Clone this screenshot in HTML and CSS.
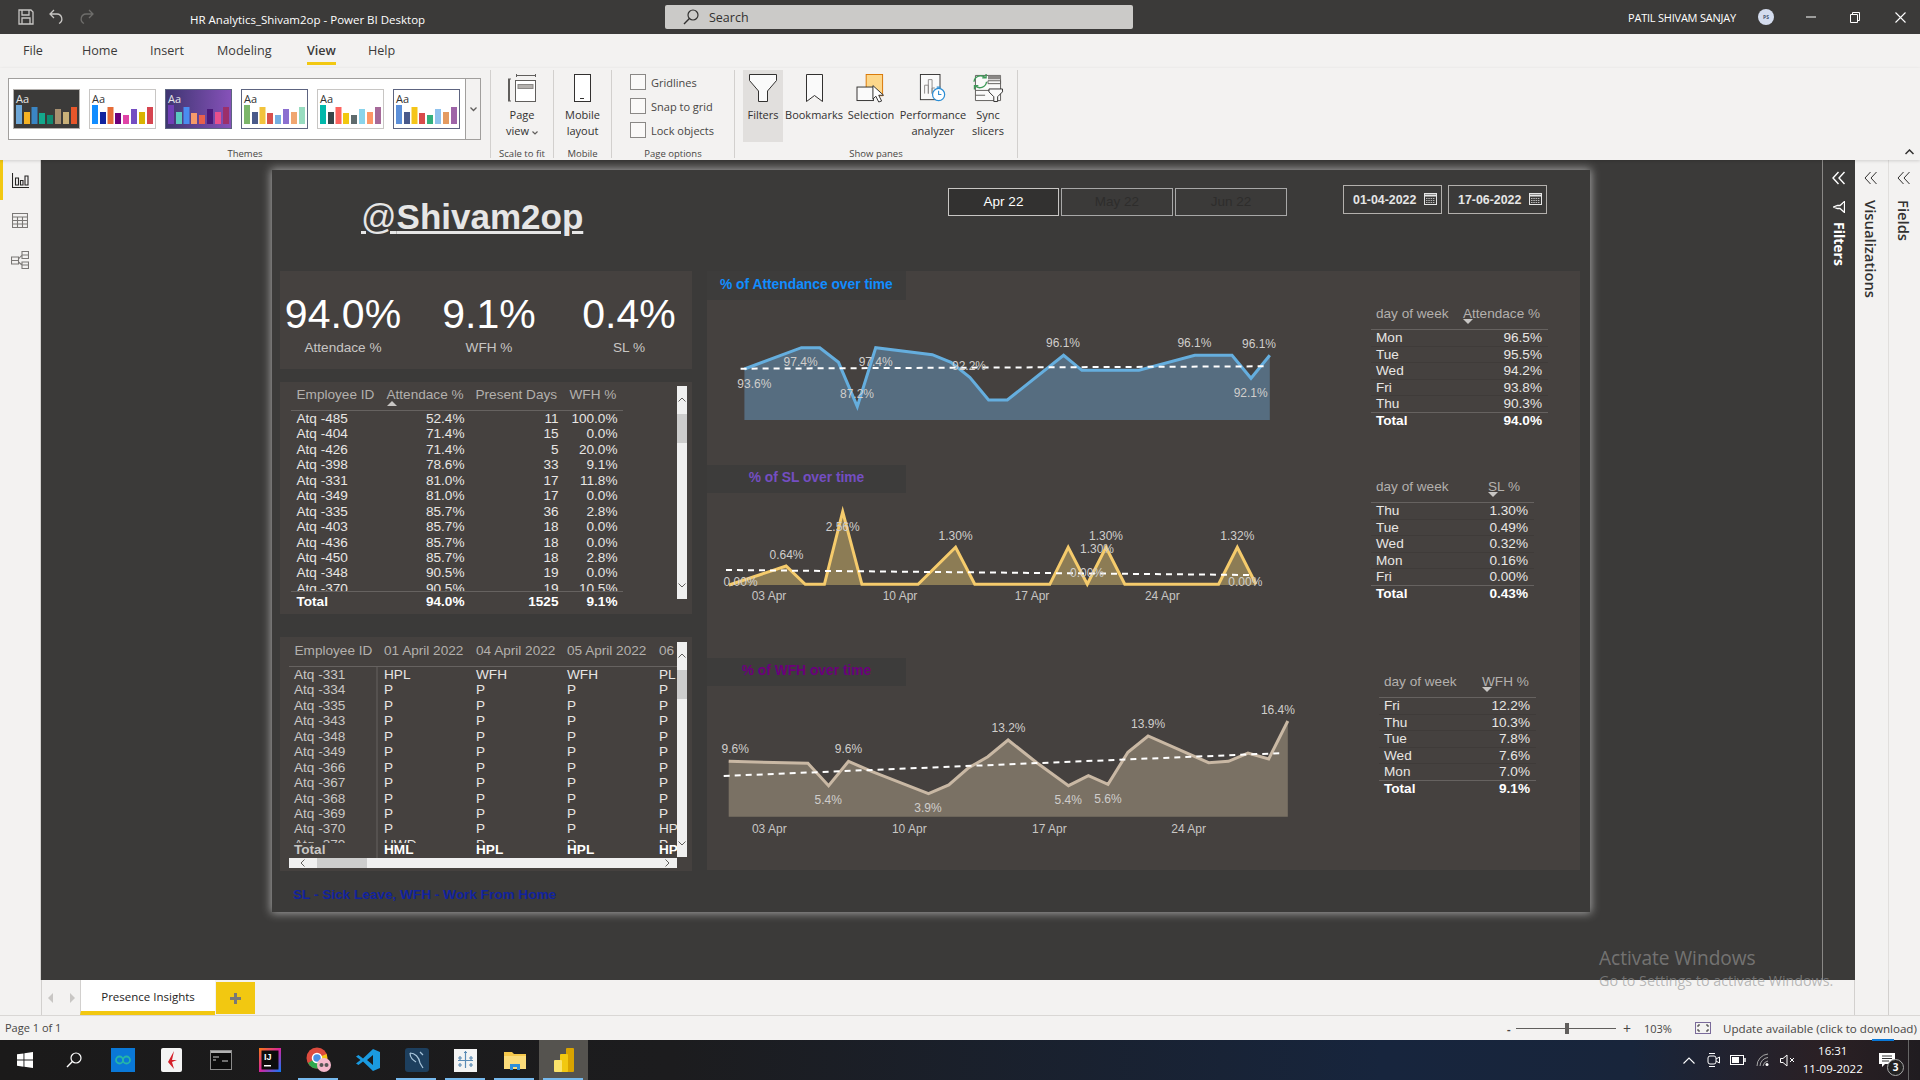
FILE: index.html
```html
<!DOCTYPE html>
<html lang="en">
<head>
<meta charset="utf-8">
<title>HR Analytics_Shivam2op - Power BI Desktop</title>
<link rel="stylesheet" href="styles.css">
</head>
<body>
<div class="app">

  <header class="titlebar">
    <div class="qat">
      <svg class="qat-i" width="16" height="16" viewBox="0 0 16 16"><path d="M1 1h12l2 2v12H1z M4 1v5h7V1 M4 15v-6h8v6" fill="none" stroke="#c8c6c4" stroke-width="1.3"/></svg>
      <svg class="qat-i" width="15" height="16" viewBox="0 0 15 16"><path d="M5 1L1 5l4 4 M1 5h7a5 5 0 0 1 2 9.5" fill="none" stroke="#c8c6c4" stroke-width="1.3"/></svg>
      <svg class="qat-i" width="15" height="16" viewBox="0 0 15 16"><path d="M10 1l4 4-4 4 M14 5H7a5 5 0 0 0-2 9.5" fill="none" stroke="#6e6d6b" stroke-width="1.3"/></svg>
    </div>
    <div class="doc-title">HR Analytics_Shivam2op - Power BI Desktop</div>
    <div class="searchbox">
      <svg width="16" height="16" viewBox="0 0 16 16"><circle cx="10" cy="6" r="5" fill="none" stroke="#323130" stroke-width="1.2"/><path d="M6.4 9.6L1 15" stroke="#323130" stroke-width="1.4"/></svg>
      <span>Search</span>
    </div>
    <div class="account">PATIL SHIVAM SANJAY</div>
    <div class="avatar">PS</div>
    <div class="winbtn win-min"><svg width="10" height="10" viewBox="0 0 10 10"><path d="M0 5h10" stroke="#fff"/></svg></div>
    <div class="winbtn win-res"><svg width="10" height="11" viewBox="0 0 10 11"><path d="M.5 2.5h7v8h-7z M2.5 2.5v-2h7v8h-2" fill="none" stroke="#fff"/></svg></div>
    <div class="winbtn win-close"><svg width="11" height="11" viewBox="0 0 11 11"><path d="M.5.5l10 10M10.5.5l-10 10" stroke="#fff" stroke-width="1.1"/></svg></div>
  </header>

  <nav class="rtabs">
    <span class="rtab">File</span>
    <span class="rtab">Home</span>
    <span class="rtab">Insert</span>
    <span class="rtab">Modeling</span>
    <span class="rtab"><b class="rtab-on">View</b></span>
    <span class="rtab">Help</span>
  </nav>

  <section class="ribbon">
    <div class="rgroup g-themes">
      <div class="gallery">
        <div class="thumbs">
          <svg class="thumb th-dark" width="67" height="40" viewBox="0 0 67 40"><text x="3" y="14" class="aa aa-l">Aa</text><rect x="3" y="16" width="6" height="19" fill="#6fa8d8"/><rect x="11" y="23" width="6" height="12" fill="#f5b324"/><rect x="18.500" y="18" width="6" height="17" fill="#3a85c4"/><rect x="26" y="24" width="6" height="11" fill="#14a88c"/><rect x="34" y="26" width="6" height="9" fill="#0f8a70"/><rect x="42" y="20" width="6" height="15" fill="#a89070"/><rect x="50" y="23" width="6" height="12" fill="#c9b078"/><rect x="58" y="18" width="6" height="17" fill="#e8562a"/></svg>
          <svg class="thumb" width="67" height="40" viewBox="0 0 67 40"><text x="3" y="14" class="aa">Aa</text><rect x="3" y="16" width="6" height="19" fill="#118dff"/><rect x="11" y="23" width="6" height="12" fill="#12239e"/><rect x="18.500" y="18" width="6" height="17" fill="#e66c37"/><rect x="26" y="24" width="6" height="11" fill="#6b007b"/><rect x="34" y="26" width="6" height="9" fill="#e044a7"/><rect x="42" y="20" width="6" height="15" fill="#744ec2"/><rect x="50" y="23" width="6" height="12" fill="#d9b300"/><rect x="58" y="18" width="6" height="17" fill="#d64550"/></svg>
          <svg class="thumb th-purple" width="67" height="40" viewBox="0 0 67 40"><defs><linearGradient id="pg" x1="0" y1="0" x2="1" y2="0"><stop offset="0" stop-color="#3d3570"/><stop offset="1" stop-color="#8752ba"/></linearGradient></defs><rect width="67" height="40" fill="url(#pg)"/><text x="3" y="14" class="aa aa-l">Aa</text><rect x="3" y="16" width="6" height="19" fill="#6f3fb5"/><rect x="11" y="23" width="6" height="12" fill="#5ac8c0"/><rect x="18.500" y="18" width="6" height="17" fill="#4a8cf0"/><rect x="26" y="24" width="6" height="11" fill="#f59a6a"/><rect x="34" y="26" width="6" height="9" fill="#e8604c"/><rect x="42" y="20" width="6" height="15" fill="#4a1a7a"/><rect x="50" y="23" width="6" height="12" fill="#e84f8c"/><rect x="58" y="18" width="6" height="17" fill="#9c2f6a"/></svg>
          <svg class="thumb th-blue" width="67" height="40" viewBox="0 0 67 40"><text x="3" y="14" class="aa">Aa</text><rect x="3" y="16" width="6" height="19" fill="#7cb66a"/><rect x="11" y="23" width="6" height="12" fill="#4a5a8a"/><rect x="18.500" y="18" width="6" height="17" fill="#f2c33c"/><rect x="26" y="24" width="6" height="11" fill="#d8504c"/><rect x="34" y="26" width="6" height="9" fill="#74aee0"/><rect x="42" y="20" width="6" height="15" fill="#8b6fd0"/><rect x="50" y="23" width="6" height="12" fill="#f0a670"/><rect x="58" y="18" width="6" height="17" fill="#98dcc0"/></svg>
          <svg class="thumb" width="67" height="40" viewBox="0 0 67 40"><text x="3" y="14" class="aa">Aa</text><rect x="3" y="16" width="6" height="19" fill="#01b8aa"/><rect x="11" y="23" width="6" height="12" fill="#374649"/><rect x="18.500" y="18" width="6" height="17" fill="#fd625e"/><rect x="26" y="24" width="6" height="11" fill="#f2c80f"/><rect x="34" y="26" width="6" height="9" fill="#5f6b6d"/><rect x="42" y="20" width="6" height="15" fill="#8ad4eb"/><rect x="50" y="23" width="6" height="12" fill="#fe9666"/><rect x="58" y="18" width="6" height="17" fill="#a66999"/></svg>
          <svg class="thumb th-blue" width="67" height="40" viewBox="0 0 67 40"><text x="3" y="14" class="aa">Aa</text><rect x="3" y="16" width="6" height="19" fill="#5b8fd9"/><rect x="11" y="23" width="6" height="12" fill="#495a8c"/><rect x="18.500" y="18" width="6" height="17" fill="#f5c518"/><rect x="26" y="24" width="6" height="11" fill="#d84b4b"/><rect x="34" y="26" width="6" height="9" fill="#33b07e"/><rect x="42" y="20" width="6" height="15" fill="#8fc2ee"/><rect x="50" y="23" width="6" height="12" fill="#e49a60"/><rect x="58" y="18" width="6" height="17" fill="#9e64a8"/></svg>
        </div>
        <div class="gal-more"><svg width="7" height="5" viewBox="0 0 7 5"><path d="M.5.5l3 3 3-3" fill="none" stroke="#605e5c" stroke-width="1.3"/></svg></div>
      </div>
      <div class="rlabel">Themes</div>
    </div>

    <div class="rgroup g-scale">
      <div class="bigbtn">
        <svg class="bigicon" width="28" height="28" viewBox="0 0 28 28"><path d="M8.500 1.500h19 M8.500 0v3 M27.500 0v3 M.5 5v22 M0 5h3 M0 27h3 M1.500 5v22" fill="none" stroke="#605e5c"/><rect x="7.500" y="6.500" width="20" height="21" fill="#fff" stroke="#605e5c"/><rect x="10" y="10.500" width="15" height="4" fill="#b3b0ad" stroke="#8a8886"/></svg>
        <span>Page</span><span>view <svg width="6" height="4" viewBox="0 0 6 4"><path d="M.5.5L3 3 5.500.5" fill="none" stroke="#605e5c" stroke-width="1.2"/></svg></span>
      </div>
      <div class="rlabel">Scale to fit</div>
    </div>

    <div class="rgroup g-mobile">
      <div class="bigbtn">
        <svg class="bigicon" width="17" height="28" viewBox="0 0 17 28"><rect x=".5" y=".5" width="16" height="27" fill="#fff" stroke="#323130"/><path d="M6 24.500h4" stroke="#323130"/></svg>
        <span>Mobile</span><span>layout</span>
      </div>
      <div class="rlabel">Mobile</div>
    </div>

    <div class="rgroup g-options">
      <div class="checks">
        <div class="chk"><i></i>Gridlines</div>
        <div class="chk"><i></i>Snap to grid</div>
        <div class="chk"><i></i>Lock objects</div>
      </div>
      <div class="rlabel">Page options</div>
    </div>

    <div class="rgroup g-panes">
      <div class="panes">
        <div class="bigbtn b-filters">
          <svg class="bigicon" width="28" height="28" viewBox="0 0 28 28"><path d="M.5.500h27v6L18.500 17v10.500h-9V17L.5 6.500z" fill="#fafafa" stroke="#323130"/></svg>
          <span>Filters</span>
        </div>
        <div class="bigbtn b-book">
          <svg class="bigicon" width="17" height="28" viewBox="0 0 17 28"><path d="M.5.500h16v27l-8-6-8 6z" fill="#fafafa" stroke="#323130"/></svg>
          <span>Bookmarks</span>
        </div>
        <div class="bigbtn b-sel">
          <svg class="bigicon" width="30" height="29" viewBox="0 0 30 29"><rect x="10" y=".5" width="17" height="22" fill="#fdd78a" stroke="#d97706"/><rect x=".5" y="13.500" width="17" height="14" fill="#fafafa" stroke="#323130"/><path d="M17 12v14l3-3 3 6 3-1-3-6h5z" fill="#fff" stroke="#323130"/></svg>
          <span>Selection</span>
        </div>
        <div class="bigbtn b-perf">
          <svg class="bigicon" width="28" height="30" viewBox="0 0 28 30"><rect x=".5" y=".5" width="21" height="27" fill="#fafafa" stroke="#323130"/><path d="M5 21V12h4v9 M9 21V6h4v15 M13 21v-6h3" fill="none" stroke="#8a8886"/><circle cx="20" cy="22" r="6.500" fill="#fff" stroke="#2a8dd4" stroke-width="1.3"/><path d="M20 18v4h3 M18 14h4" fill="none" stroke="#2a8dd4" stroke-width="1.2"/></svg>
          <span>Performance</span><span>analyzer</span>
        </div>
        <div class="bigbtn b-sync">
          <svg class="bigicon" width="32" height="29" viewBox="0 0 32 29"><path d="M3 1.500h26v26H3z M3 17h17 M3 22h10 M16 7h13v3H16z" fill="#fafafa" stroke="#605e5c"/><rect x="16" y="1.500" width="13" height="4" fill="#8a8886"/><path d="M1.500 8a7 7 0 0 1 12-4 M14.500 8a7 7 0 0 1-12 4 M10 4h4V0 M6 12H2v4" fill="none" stroke="#3d9a58" stroke-width="1.4"/><path d="M17 15.500h14v3l-5 5v5h-4v-5l-5-5z" fill="#fafafa" stroke="#323130"/></svg>
          <span>Sync</span><span>slicers</span>
        </div>
      </div>
      <div class="rlabel">Show panes</div>
    </div>
    <svg class="collapse" width="9" height="6" viewBox="0 0 9 6"><path d="M.5 5L4.500 1l4 4" fill="none" stroke="#323130" stroke-width="1.500"/></svg>
  </section>

  <main class="main">
    <aside class="rail">
      <div class="rail-i rail-on"><svg width="17" height="15" viewBox="0 0 17 15"><path d="M.5 0v14.500H17 M3.500 5h3v7h-3z M8.500 7.500h2.500V12H8.500z M13 3h3v9h-3z" fill="none" stroke="#252423" stroke-width="1.100"/></svg></div>
      <div class="rail-i"><svg width="16" height="15" viewBox="0 0 16 15"><path d="M.5.5h15v14H.5z M.5 4h15 M.5 7.500h15 M.5 11h15 M5.500 4v10.500 M10.500 4v10.500" fill="none" stroke="#7a7876" stroke-width="1.100"/></svg></div>
      <div class="rail-i"><svg width="18" height="18" viewBox="0 0 18 18"><path d="M.5 6h7v7h-7z M11 .5h6.500v7H11z M11 11h6.500v6.500H11z M7.500 8L11 4 M7.500 11l3.500 3 M.5 9.500h7 M11 4h6.500 M11 14h6.500" fill="none" stroke="#7a7876" stroke-width="1.100"/></svg></div>
    </aside>

    <div class="canvas">
      <div class="report">
        <div class="report-head">
          <div class="brand"><span class="brand-at">@</span>Shivam2op</div>
          <div class="slicer">
            <div class="slice slice-on">Apr 22</div>
            <div class="slice">May 22</div>
            <div class="slice">Jun 22</div>
          </div>
          <div class="dates">
            <div class="datebox">01-04-2022<svg width="13" height="13" viewBox="0 0 13 13"><rect x=".5" y="1.500" width="12" height="11" fill="none" stroke="#e6e6e6"/><path d="M.5 3.500h12" stroke="#e6e6e6" stroke-width="2"/><path d="M2 6.500h9M2 8.500h9M2 10.500h9" stroke="#b8b8b8" stroke-dasharray="1.500 .8"/></svg></div>
            <div class="datebox">17-06-2022<svg width="13" height="13" viewBox="0 0 13 13"><rect x=".5" y="1.500" width="12" height="11" fill="none" stroke="#e6e6e6"/><path d="M.5 3.500h12" stroke="#e6e6e6" stroke-width="2"/><path d="M2 6.500h9M2 8.500h9M2 10.500h9" stroke="#b8b8b8" stroke-dasharray="1.500 .8"/></svg></div>
          </div>
        </div>

        <div class="report-body">
          <div class="leftcol">
            <div class="panel kpis">
              <div class="kpi k1"><div class="kpi-v">94.0%</div><div class="kpi-l">Attendace %</div></div>
              <div class="kpi k2"><div class="kpi-v">9.1%</div><div class="kpi-l">WFH %</div></div>
              <div class="kpi k3"><div class="kpi-v">0.4%</div><div class="kpi-l">SL %</div></div>
            </div>

            <div class="panel tpanel tp1">
              <div class="grid1">
                <div class="thead tr1">
                  <span>Employee ID</span><span class="sort-up">Attendace %</span><span>Present Days</span><span>WFH %</span>
                </div>
                <div class="tscroll ts1">
                  <div class="tr tr1"><span>Atq -485</span><span>52.4%</span><span>11</span><span>100.0%</span></div>
                  <div class="tr tr1"><span>Atq -404</span><span>71.4%</span><span>15</span><span>0.0%</span></div>
                  <div class="tr tr1"><span>Atq -426</span><span>71.4%</span><span>5</span><span>20.0%</span></div>
                  <div class="tr tr1"><span>Atq -398</span><span>78.6%</span><span>33</span><span>9.1%</span></div>
                  <div class="tr tr1"><span>Atq -331</span><span>81.0%</span><span>17</span><span>11.8%</span></div>
                  <div class="tr tr1"><span>Atq -349</span><span>81.0%</span><span>17</span><span>0.0%</span></div>
                  <div class="tr tr1"><span>Atq -335</span><span>85.7%</span><span>36</span><span>2.8%</span></div>
                  <div class="tr tr1"><span>Atq -403</span><span>85.7%</span><span>18</span><span>0.0%</span></div>
                  <div class="tr tr1"><span>Atq -436</span><span>85.7%</span><span>18</span><span>0.0%</span></div>
                  <div class="tr tr1"><span>Atq -450</span><span>85.7%</span><span>18</span><span>2.8%</span></div>
                  <div class="tr tr1"><span>Atq -348</span><span>90.5%</span><span>19</span><span>0.0%</span></div>
                  <div class="tr tr1"><span>Atq -370</span><span>90.5%</span><span>19</span><span>10.5%</span></div>
                </div>
                <div class="ttotal tr1"><span>Total</span><span>94.0%</span><span>1525</span><span>9.1%</span></div>
              </div>
              <div class="vbar vb1">
                <svg class="vb-up" width="8" height="5" viewBox="0 0 8 5"><path d="M.5 4.500L4 1l3.500 3.500" fill="none" stroke="#605e5c"/></svg>
                <i class="vb-thumb"></i>
                <svg class="vb-down" width="8" height="5" viewBox="0 0 8 5"><path d="M.5.5L4 4 7.500.5" fill="none" stroke="#605e5c"/></svg>
              </div>
            </div>

            <div class="panel tpanel tp2">
              <div class="grid2">
                <div class="thead2 tr2">
                  <span>Employee ID</span><span>01 April 2022</span><span>04 April 2022</span><span>05 April 2022</span><span>06</span>
                </div>
                <div class="tscroll ts2">
                  <div class="tr tr2"><span>Atq -331</span><span>HPL</span><span>WFH</span><span>WFH</span><span>PL</span></div>
                  <div class="tr tr2"><span>Atq -334</span><span>P</span><span>P</span><span>P</span><span>P</span></div>
                  <div class="tr tr2"><span>Atq -335</span><span>P</span><span>P</span><span>P</span><span>P</span></div>
                  <div class="tr tr2"><span>Atq -343</span><span>P</span><span>P</span><span>P</span><span>P</span></div>
                  <div class="tr tr2"><span>Atq -348</span><span>P</span><span>P</span><span>P</span><span>P</span></div>
                  <div class="tr tr2"><span>Atq -349</span><span>P</span><span>P</span><span>P</span><span>P</span></div>
                  <div class="tr tr2"><span>Atq -366</span><span>P</span><span>P</span><span>P</span><span>P</span></div>
                  <div class="tr tr2"><span>Atq -367</span><span>P</span><span>P</span><span>P</span><span>P</span></div>
                  <div class="tr tr2"><span>Atq -368</span><span>P</span><span>P</span><span>P</span><span>P</span></div>
                  <div class="tr tr2"><span>Atq -369</span><span>P</span><span>P</span><span>P</span><span>P</span></div>
                  <div class="tr tr2"><span>Atq -370</span><span>P</span><span>P</span><span>P</span><span>HP</span></div>
                  <div class="tr tr2"><span>Atq -379</span><span>HWD</span><span>P</span><span>P</span><span>P</span></div>
                </div>
                <div class="ttotal2 tr2"><span>Total</span><span>HML</span><span>HPL</span><span>HPL</span><span>HP</span></div>
                <div class="hbar">
                  <svg class="hb-l" width="5" height="8" viewBox="0 0 5 8"><path d="M4.500.5L1 4l3.500 3.500" fill="none" stroke="#605e5c"/></svg>
                  <i class="hb-thumb"></i>
                  <svg class="hb-r" width="5" height="8" viewBox="0 0 5 8"><path d="M.5.500L4 4 .5 7.500" fill="none" stroke="#605e5c"/></svg>
                </div>
              </div>
              <div class="vbar vb2">
                <svg class="vb-up" width="8" height="5" viewBox="0 0 8 5"><path d="M.5 4.500L4 1l3.500 3.500" fill="none" stroke="#605e5c"/></svg>
                <i class="vb-thumb"></i>
                <svg class="vb-down" width="8" height="5" viewBox="0 0 8 5"><path d="M.5.5L4 4 7.500.5" fill="none" stroke="#605e5c"/></svg>
              </div>
            </div>

            <div class="footnote">SL - Sick Leave, WFH - Work From Home</div>
          </div>

          <div class="panel charts">
            <section class="chart c1">
              <div class="chart-left">
                <div class="band band-1 t-blue">% of Attendance over time</div>
                <svg class="plot" width="664" height="165" viewBox="707 300 664 165">
                  <polygon class="a-blue" points="744.4,369 801.4,347.7 819.8,347.7 838.5,362.3 857.3,406.7 875.7,347.7 932.3,354.7 951,362.3 969.8,377.3 988.6,400 1007.3,400 1063.6,355.3 1081.9,370.3 1139,370.3 1194.8,355.3 1232,355.3 1251,378.3 1269.8,355.3 1269.8,420 744.4,420"/>
                  <polyline class="l-blue" points="744.4,369 801.4,347.7 819.8,347.7 838.5,362.3 857.3,406.7 875.7,347.7 932.3,354.7 951,362.3 969.8,377.3 988.6,400 1007.3,400 1063.6,355.3 1081.9,370.3 1139,370.3 1194.8,355.3 1232,355.3 1251,378.3 1269.8,355.3"/>
                  <line class="trend" x1="740.6" y1="368.700" x2="1266.400" y2="366.300"/>
                  <text class="dl" x="754.300" y="388">93.6%</text>
                  <text class="dl" x="800.600" y="366">97.4%</text>
                  <text class="dl" x="875.700" y="366">97.4%</text>
                  <text class="dl" x="857" y="398">87.2%</text>
                  <text class="dl" x="969" y="370">92.2%</text>
                  <text class="dl" x="1063" y="347">96.1%</text>
                  <text class="dl" x="1194.400" y="347">96.1%</text>
                  <text class="dl" x="1259" y="348">96.1%</text>
                  <text class="dl" x="1250.700" y="397">92.1%</text>
                </svg>
              </div>
              <div class="daytbl dt-a">
                <div class="dhead"><span>day of week</span><span class="sort-down">Attendace %</span></div>
                <div class="drow"><span>Mon</span><span>96.5%</span></div>
                <div class="drow"><span>Tue</span><span>95.5%</span></div>
                <div class="drow"><span>Wed</span><span>94.2%</span></div>
                <div class="drow"><span>Fri</span><span>93.8%</span></div>
                <div class="drow"><span>Thu</span><span>90.3%</span></div>
                <div class="dtotal"><span>Total</span><span>94.0%</span></div>
              </div>
            </section>

            <section class="chart c2">
              <div class="chart-left">
                <div class="band band-2 t-violet">% of SL over time</div>
                <svg class="plot" width="664" height="165" viewBox="707 493 664 165">
                  <polygon class="a-gold" points="729,585 786.1,566 805.2,584.3 824.4,584.3 842.7,511.7 861.9,584.3 918.1,584.3 955.6,547.3 974.8,584.3 1049.8,584.3 1068.2,547.3 1087.3,584.3 1106,547.3 1124.8,584.3 1218.6,584.3 1237.3,547.3 1256,584.3 1256,585"/>
                  <polyline class="l-gold" points="729,585 786.1,566 805.2,584.3 824.4,584.3 842.7,511.7 861.9,584.3 918.1,584.3 955.6,547.3 974.8,584.3 1049.8,584.3 1068.2,547.3 1087.3,584.3 1106,547.3 1124.8,584.3 1218.6,584.3 1237.3,547.3 1256,584.3"/>
                  <line class="trend" x1="726" y1="570" x2="1251" y2="575"/>
                  <text class="dl" x="740.600" y="586">0.00%</text>
                  <text class="dl" x="786.500" y="559">0.64%</text>
                  <text class="dl" x="842.700" y="531">2.56%</text>
                  <text class="dl" x="955.600" y="540">1.30%</text>
                  <text class="dl" x="1097" y="553">1.30%</text>
                  <text class="dl" x="1106" y="540">1.30%</text>
                  <text class="dl" x="1087" y="577">0.00%</text>
                  <text class="dl" x="1237.300" y="540">1.32%</text>
                  <text class="dl" x="1245.300" y="586">0.00%</text>
                  <text class="ax" x="769" y="600">03 Apr</text>
                  <text class="ax" x="900" y="600">10 Apr</text>
                  <text class="ax" x="1032" y="600">17 Apr</text>
                  <text class="ax" x="1162.300" y="600">24 Apr</text>
                </svg>
              </div>
              <div class="daytbl dt-b">
                <div class="dhead"><span>day of week</span><span class="sort-down">SL %</span></div>
                <div class="drow"><span>Thu</span><span>1.30%</span></div>
                <div class="drow"><span>Tue</span><span>0.49%</span></div>
                <div class="drow"><span>Wed</span><span>0.32%</span></div>
                <div class="drow"><span>Mon</span><span>0.16%</span></div>
                <div class="drow"><span>Fri</span><span>0.00%</span></div>
                <div class="dtotal"><span>Total</span><span>0.43%</span></div>
              </div>
            </section>

            <section class="chart c3">
              <div class="chart-left">
                <div class="band band-3 t-purple">% of WFH over time</div>
                <svg class="plot" width="664" height="184" viewBox="707 686 664 184">
                  <polygon class="a-taupe" points="728.7,761.3 807.9,763.3 828.6,785.7 848.5,761.3 872.2,771.7 928.5,793.7 948.8,785 967.9,768.3 987.8,756.7 1008.1,740 1036.8,762.7 1068.5,785.7 1088.4,775.7 1108,784.3 1127.9,752.3 1148.1,736 1208.6,762.7 1228.5,761.3 1248,753 1268.7,759 1287.8,721 1287.8,816.7 728.7,816.7"/>
                  <polyline class="l-taupe" points="728.7,761.3 807.9,763.3 828.6,785.7 848.5,761.3 872.2,771.7 928.5,793.7 948.8,785 967.9,768.3 987.8,756.7 1008.1,740 1036.8,762.7 1068.5,785.7 1088.4,775.7 1108,784.3 1127.9,752.3 1148.1,736 1208.6,762.7 1228.5,761.3 1248,753 1268.7,759 1287.8,721"/>
                  <line class="trend" x1="723.700" y1="776" x2="1284" y2="753"/>
                  <text class="dl" x="735.200" y="753">9.6%</text>
                  <text class="dl" x="848.500" y="753">9.6%</text>
                  <text class="dl" x="828.200" y="804">5.4%</text>
                  <text class="dl" x="928" y="812">3.9%</text>
                  <text class="dl" x="1008.500" y="732">13.2%</text>
                  <text class="dl" x="1068.200" y="804">5.4%</text>
                  <text class="dl" x="1108" y="803">5.6%</text>
                  <text class="dl" x="1148.100" y="728">13.9%</text>
                  <text class="dl" x="1277.900" y="714">16.4%</text>
                  <text class="ax" x="769.300" y="833">03 Apr</text>
                  <text class="ax" x="909.300" y="833">10 Apr</text>
                  <text class="ax" x="1049.400" y="833">17 Apr</text>
                  <text class="ax" x="1188.700" y="833">24 Apr</text>
                </svg>
              </div>
              <div class="daytbl dt-c">
                <div class="dhead"><span>day of week</span><span class="sort-down">WFH %</span></div>
                <div class="drow"><span>Fri</span><span>12.2%</span></div>
                <div class="drow"><span>Thu</span><span>10.3%</span></div>
                <div class="drow"><span>Tue</span><span>7.8%</span></div>
                <div class="drow"><span>Wed</span><span>7.6%</span></div>
                <div class="drow"><span>Mon</span><span>7.0%</span></div>
                <div class="dtotal"><span>Total</span><span>9.1%</span></div>
              </div>
            </section>
          </div>
        </div>
      </div>
    </div>

    <aside class="vpane vp-filters">
      <svg class="chev" width="14" height="14" viewBox="0 0 14 14"><path d="M6.500 1L1 7l5.500 6 M12.500 1L7 7l5.500 6" fill="none" stroke="#fff" stroke-width="1.400"/></svg>
      <svg class="vp-fi" width="12" height="12" viewBox="0 0 12 12"><path d="M11.500.5v11L7 7.500H4.500L.5 6l4-1.500H7z" fill="none" stroke="#fff" stroke-width="1.300"/></svg>
      <span class="vtext">Filters</span>
    </aside>
    <aside class="vpane vp-light vp-viz">
      <svg class="chev" width="14" height="14" viewBox="0 0 14 14"><path d="M6.500 1L1 7l5.500 6 M12.500 1L7 7l5.500 6" fill="none" stroke="#323130"/></svg>
      <span class="vtext vtext-d">Visualizations</span>
    </aside>
    <aside class="vpane vp-light vp-fields">
      <svg class="chev" width="14" height="14" viewBox="0 0 14 14"><path d="M6.500 1L1 7l5.500 6 M12.500 1L7 7l5.500 6" fill="none" stroke="#323130"/></svg>
      <span class="vtext vtext-d">Fields</span>
    </aside>
  </main>

  <div class="pagebar">
    <div class="pg-nav">
      <svg width="5" height="10" viewBox="0 0 5 10"><path d="M5 0L0 5l5 5z" fill="#c8c6c4"/></svg>
      <svg width="5" height="10" viewBox="0 0 5 10"><path d="M0 0l5 5-5 5z" fill="#c8c6c4"/></svg>
    </div>
    <div class="pg-tab">Presence Insights</div>
    <div class="pg-add"><svg width="11" height="11" viewBox="0 0 11 11"><path d="M5.500 0v11M0 5.500h11" stroke="#7a7876" stroke-width="3"/></svg></div>
    <div class="pg-right"><i></i></div>
  </div>

  <div class="statusbar">
    <span class="st-page">Page 1 of 1</span>
    <span class="st-minus">-</span>
    <div class="slider"><i></i></div>
    <span class="st-plus">+</span>
    <span class="st-zoom">103%</span>
    <svg class="st-fit" width="16" height="12" viewBox="0 0 16 12"><rect x=".5" y=".5" width="15" height="11" fill="none" stroke="#7a6a9a"/><path d="M3 5V3h2M11 3h2v2M13 7v2h-2M5 9H3V7" fill="none" stroke="#323130"/></svg>
    <span class="st-update">Update available (click to download)</span>
  </div>

  <footer class="taskbar">
    <div class="tb"><svg width="16" height="16" viewBox="0 0 16 16"><path d="M0 2.300l6.500-.9v6.200H0z M7.400 1.300L16 0v7.600H7.400z M0 8.500h6.500v6.200L0 13.800z M7.400 8.500H16V16l-8.600-1.200z" fill="#fff"/></svg></div>
    <div class="tb"><svg width="16" height="16" viewBox="0 0 16 16"><circle cx="10" cy="6" r="5" fill="none" stroke="#fff" stroke-width="1.200"/><path d="M6.400 9.600L1 15" stroke="#fff" stroke-width="1.400"/></svg></div>
    <div class="tb"><svg width="24" height="24" viewBox="0 0 24 24"><rect width="24" height="24" fill="#0a78d7"/><circle cx="8.500" cy="12" r="3.500" fill="none" stroke="#26b6a8" stroke-width="1.800"/><circle cx="15.500" cy="12" r="3.500" fill="none" stroke="#26b6a8" stroke-width="1.800"/></svg></div>
    <div class="tb"><svg width="21" height="24" viewBox="0 0 21 24"><rect width="21" height="24" rx="2" fill="#f4f4f4"/><path d="M13 3L7 14l6 7-2-7 5-2-5 0z" fill="#d4202a"/></svg></div>
    <div class="tb"><svg width="22" height="20" viewBox="0 0 22 20"><rect x=".5" y=".5" width="21" height="19" fill="#0c0c0c" stroke="#8a8a8a"/><rect x="1" y="1" width="20" height="2" fill="#b0b0b0"/><path d="M3 7h6M3 10h3M12 11h6" stroke="#d0d0d0"/></svg></div>
    <div class="tb"><svg width="22" height="24" viewBox="0 0 22 24"><defs><linearGradient id="ij" x1="0" y1="0" x2="1" y2="1"><stop offset="0" stop-color="#f97a12"/><stop offset=".5" stop-color="#d6249f"/><stop offset="1" stop-color="#087cfa"/></linearGradient></defs><rect width="22" height="24" fill="url(#ij)"/><rect x="2.500" y="2.500" width="17" height="19" fill="#0c0c0c"/><rect x="5" y="17" width="7" height="1.500" fill="#fff"/><text x="5" y="12" class="ij">IJ</text></svg></div>
    <div class="tb tb-u"><svg width="26" height="26" viewBox="0 0 26 26"><circle cx="11" cy="11" r="10.500" fill="#dd4b3e"/><path d="M11 11L2 16a10.500 10.500 0 0 0 10 5.500z" fill="#2fa84f"/><path d="M11 11l9.500-4A10.500 10.500 0 0 1 12 21.500z" fill="#f5c518"/><circle cx="11" cy="11" r="4.500" fill="#4a90e2" stroke="#fff" stroke-width="1.500"/><circle cx="18" cy="18" r="7" fill="#f5b8cc"/><circle cx="15.500" cy="18" r="2" fill="#555"/><circle cx="20.500" cy="18" r="2" fill="#555"/></svg></div>
    <div class="tb"><svg width="24" height="24" viewBox="0 0 24 24"><path d="M17 1l7 3v16l-7 3L7 13.500 2.500 17 0 15.500 4.500 12 0 8.500 2.500 7 7 10.500z M17 7l-6 5 6 5z" fill="#1a9ae0" fill-rule="evenodd"/></svg></div>
    <div class="tb tb-u"><svg width="24" height="24" viewBox="0 0 24 24"><rect width="24" height="24" rx="3" fill="#1d3f5e"/><path d="M5 5c5 0 9 4 10 10l3 5M5 5c0 5 3 7 6 9M15 4l3 3" fill="none" stroke="#a9c6dc" stroke-width="1.200"/></svg></div>
    <div class="tb tb-u"><svg width="23" height="23" viewBox="0 0 23 23"><rect width="23" height="23" fill="#f4f4f4"/><path d="M11.500 4v15M4 11.500h15M6 7v4M4 9h4M17 7v4M15 9h4M6 14v4M4 16h4M17 14v4M15 16h4M11.500 2v3M10 3.500h3" stroke="#5a8bb5" stroke-width="1.200"/></svg></div>
    <div class="tb tb-u"><svg width="22" height="21" viewBox="0 0 22 21"><path d="M0 2h8l2 2h12v15H0z" fill="#f5c84c"/><path d="M0 6h22v13H0z" fill="#fbdc7a"/><path d="M6 20v-6h10v6h-3v-3H9v3z" fill="#2f8fd8"/></svg></div>
    <div class="tb tb-u tb-on"><svg width="20" height="24" viewBox="0 0 20 24"><rect x="12" width="8" height="24" rx="1" fill="#d9a300"/><rect x="6" y="6" width="8" height="18" rx="1" fill="#f2c811"/><rect y="12" width="8" height="12" rx="1" fill="#fbe36b"/></svg></div>
    <i class="tb-line"></i>
    <div class="tray">
      <div class="tray-i"><svg width="12" height="7" viewBox="0 0 12 7"><path d="M.5 6.500L6 1l5.500 5.500" fill="none" stroke="#fff" stroke-width="1.100"/></svg></div>
      <div class="tray-i"><svg width="13" height="16" viewBox="0 0 13 16"><rect x="1" y="4" width="8" height="8" rx="2" fill="none" stroke="#fff"/><path d="M9 7l3.500-2v6L9 9 M2 1.500h6 M2 14.500h6" fill="none" stroke="#fff"/></svg></div>
      <div class="tray-i"><svg width="16" height="10" viewBox="0 0 16 10"><rect x=".5" y=".5" width="13" height="9" fill="none" stroke="#fff"/><rect x="2" y="2" width="7" height="6" fill="#fff"/><path d="M15 3v4" stroke="#fff" stroke-width="1.500"/></svg></div>
      <div class="tray-i"><svg width="14" height="14" viewBox="0 0 14 14"><path d="M1 13a12 12 0 0 1 11-12 M4 13a9 9 0 0 1 8-8.500 M7 13a6 6 0 0 1 5-5" fill="none" stroke="#a8a8a8"/><circle cx="11" cy="11.500" r="1.500" fill="#fff"/></svg></div>
      <div class="tray-i"><svg width="15" height="13" viewBox="0 0 15 13"><path d="M.5 4.500h2.500L7 1v11L3 8.500H.5z M10 4l4 4 M14 4l-4 4" fill="none" stroke="#fff"/></svg></div>
    </div>
    <div class="clock"><span>16:31</span><span>11-09-2022</span></div>
    <div class="notif">
      <svg width="16" height="14" viewBox="0 0 16 14"><path d="M0 0h16v11H6l-3 3v-3H0z" fill="#fff"/><path d="M3 3h10M3 5.500h10M3 8h7" stroke="#333"/></svg>
      <b class="notif-n">3</b>
    </div>
    <i class="tb-end"></i>
  </footer>

  <div class="activate">
    <div class="act-1">Activate Windows</div>
    <div class="act-2">Go to Settings to activate Windows.</div>
  </div>
</div>
</body>
</html>
```

FILE: styles.css
```css
* { box-sizing: border-box; }
html, body { margin: 0; padding: 0; }
body { width: 1920px; height: 1080px; overflow: hidden; font-family: "Open Sans", "Noto Sans", sans-serif; color: #252423; }
.app { position: relative; width: 1920px; height: 1080px; display: flex; flex-direction: column; background: #f3f2f1; overflow: hidden; }

/* title bar */
.titlebar { height: 34px; flex: none; background: #3b3a39; display: flex; align-items: center; color: #fff; }
.qat { width: 190px; display: flex; align-items: center; padding-left: 18px; flex: none; }
.qat-i { margin-right: 15px; }
.doc-title { width: 475px; flex: none; font-size: 11.5px; padding-top: 5px; }
.searchbox { width: 468px; height: 24px; flex: none; background: #cbcac8; border-radius: 2px; display: flex; align-items: center; padding-left: 18px; gap: 10px; color: #323130; font-size: 12.5px; }
.account { margin-left: 495px; width: 130px; flex: none; font-size: 11px; white-space: nowrap; letter-spacing: -.22px; }
.avatar { width: 16px; height: 16px; flex: none; border-radius: 50%; background: #d4dcee; color: #44546f; font-size: 5px; font-weight: 700; display: flex; align-items: center; justify-content: center; }
.winbtn { flex: none; display: flex; align-items: center; }
.win-min { margin-left: 32px; }
.win-res { margin-left: 34px; }
.win-close { margin-left: 35px; }

/* ribbon tabs */
.rtabs { height: 34px; flex: none; display: grid; grid-template-columns: 59px 68px 67px 90px 61px auto; padding: 9px 0 0 23px; font-size: 12.6px; color: #3b3a39; }
.rtab { line-height: 16px; }
.rtab-on { display: inline-block; font-weight: 600; padding-bottom: 3px; border-bottom: 3px solid #f2c811; }

/* ribbon */
.ribbon { position: relative; height: 92px; flex: none; display: flex; box-shadow: 0 1px 3px rgba(0,0,0,.15); z-index: 2; background: #f3f2f1; }
.rgroup { height: 88px; margin-top: 2px; display: flex; flex-direction: column; border-right: 1px solid #d2d0ce; flex: none; align-items: center; }
.g-themes { width: 491px; align-items: flex-start; }
.g-scale { width: 63px; }
.g-mobile { width: 58px; }
.g-options { width: 123px; align-items: flex-start; }
.g-panes { width: 283px; align-items: flex-start; }
.rlabel { margin-top: auto; margin-bottom: -3px; line-height: 14px; font-size: 9.5px; color: #484644; align-self: stretch; text-align: center; }
.gallery { margin: 8px 0 0 8px; width: 473px; height: 62px; display: flex; background: #fff; border: 1px solid #a19f9d; }
.thumbs { width: 456px; display: flex; align-items: center; padding-left: 4px; gap: 9px; }
.thumb { border: 0; background: #fff; outline: 1.5px solid #c8c6c4; outline-offset: -1px; flex: none; }
.th-dark { background: #3b3a39; outline-color: #b3b0ad; }
.th-purple, .th-blue { outline-color: #5d6480; }
.aa { font: 11px "Open Sans", sans-serif; fill: #323130; }
.aa-l { fill: #e6e6e6; }
.gal-more { flex: 1; background: #f3f2f1; border-left: 1px solid #a19f9d; display: flex; align-items: center; justify-content: center; }
.bigbtn { height: 72px; padding-top: 4px; display: flex; flex-direction: column; align-items: center; font-size: 11px; line-height: 16px; color: #323130; white-space: nowrap; flex: none; }
.bigicon { height: 28px; margin-bottom: 5px; flex: none; overflow: visible; }
.checks { display: flex; flex-direction: column; gap: 8px; padding: 4px 0 0 18px; }
.chk { height: 16px; display: flex; align-items: center; font-size: 11px; color: #484644; }
.chk i { width: 16px; height: 16px; border: 1px solid #8a8886; background: #faf9f8; margin-right: 5px; }
.panes { display: flex; padding-left: 8px; }
.b-filters { width: 40px; background: #e1dfdd; }
.b-book { width: 62px; }
.b-sel { width: 52px; }
.b-perf { width: 72px; }
.b-sync { width: 38px; }
.collapse { position: absolute; right: 6px; bottom: 5px; }

/* main */
.main { height: 820px; flex: none; display: flex; }
.rail { width: 41px; flex: none; background: #f3f2f1; border-right: 1px solid #d2d0ce; }
.rail-i { height: 40px; display: flex; align-items: center; justify-content: center; }
.rail-on { box-shadow: inset 3px 0 0 #f2c811; }
.canvas { flex: 1; background: #3b3a39; padding: 10px 0 0 231px; min-width: 0; }
.report { width: 1318px; height: 742px; background: #3b3a39; box-shadow: 0 0 9px 1px rgba(255,255,255,.55); padding: 0 10px 0 8px; }
.report-head { height: 101px; display: flex; align-items: flex-start; }
.brand { width: 587px; margin: 24px 0 0 81px; font: 700 35px/46px "Liberation Sans", Arial, sans-serif; color: #e6e6e6; text-decoration: underline; text-decoration-thickness: 3px; flex: none; }
.brand-at { font-weight: 400; }
.slicer { display: flex; gap: 2px; margin-top: 18px; flex: none; }
.slice { width: 112px; height: 28px; border: 1px solid #a8a8a8; font: 13.5px/26px "Liberation Sans", Arial, sans-serif; text-align: center; color: #2e2d2c; }
.slice-on { color: #fff; background: #323130; border-color: #c8c6c4; width: 111px; }
.dates { display: flex; gap: 6px; margin: 15px 0 0 56px; flex: none; }
.datebox { width: 99px; height: 29px; border: 1px solid #b3b0ad; display: flex; align-items: center; padding-left: 9px; gap: 8px; font: 700 12.4px "Liberation Sans", Arial, sans-serif; color: #e6e6e6; }
.datebox svg { margin-top: -3px; }
.report-body { display: flex; align-items: flex-start; gap: 15px; }
.leftcol { width: 412px; flex: none; display: flex; flex-direction: column; font-family: "Liberation Sans", Arial, sans-serif; }
.panel { background: #45413f; }

.kpis { height: 98px; margin-bottom: 13px; display: grid; grid-template-columns: 126px 166px 114px; text-align: center; }
.kpi { padding-top: 21px; white-space: nowrap; }
.kpi-v { font-size: 41px; line-height: 44px; color: #fff; }
.kpi-l { font-size: 13.6px; line-height: 18px; margin-top: 3px; color: #c8c6c4; }

.tpanel { display: flex; align-items: flex-start; font-size: 13.6px; color: #e8e6e4; position: relative; }
.tp1 { height: 232px; margin-bottom: 23px; padding-left: 11px; }
.tp2 { height: 234px; padding-left: 9px; }
.grid1 { width: 332px; flex: none; }
.grid2 { width: 388px; flex: none; overflow: hidden; }
.tr1 { display: grid; grid-template-columns: 90px 89px 94px 59px; }
.tr1 > span { padding: 0 5.5px; white-space: nowrap; text-align: right; }
.tr1 > span:first-child { text-align: left; padding-left: 5.5px; }
.thead { height: 29px; line-height: 26px; color: #b3b0ad; border-bottom: 1px solid #666260; }
.thead > span { text-align: left; position: relative; }
.sort-up::after { content: ""; position: absolute; left: 5.5px; top: 19px; border: 5px solid transparent; border-top: 0; border-bottom: 5px solid #c8c6c4; }
.tscroll { overflow: hidden; }
.ts1 { height: 181px; border-bottom: 1px solid #666260; }
.ts2 { height: 176px; }
.tr { height: 15.45px; line-height: 15.45px; }
.ttotal { height: 21px; line-height: 20px; font-weight: 700; color: #fff; }
.tr2 { display: grid; grid-template-columns: 89px 92px 91px 92px 24px; }
.tr2 > span { padding-left: 6px; white-space: nowrap; overflow: hidden; }
.tr2 > span:first-child { padding-left: 5px; color: #c8c6c4; border-right: 2px solid #55514f; }
.thead2 { height: 30px; line-height: 28px; color: #b3b0ad; border-bottom: 1px solid #666260; }
.thead2 > span:first-child { color: #b3b0ad; border-right: 0; padding-left: 5.5px; }
.ttotal2 { height: 15px; line-height: 14px; font-weight: 700; color: #fff; }
.hbar { height: 10px; background: #f0f0f0; display: flex; align-items: center; padding: 0 7px 0 11px; }
.hb-thumb { width: 50px; height: 10px; margin-left: 12px; background: #cdcdcd; }
.hb-r { margin-left: auto; }
.vbar { position: relative; width: 10px; flex: none; background: #f0f0f0; display: flex; flex-direction: column; align-items: center; }
.vb1 { height: 213px; margin: 4px 0 0 54px; padding-top: 11px; }
.vb2 { height: 215px; margin: 5px 0 0 0; padding-top: 11px; }
.vb-thumb { display: block; width: 10px; height: 29px; margin-top: 12px; background: #cdcdcd; }
.vb-down { margin-top: auto; margin-bottom: 11px; }
.footnote { margin: 16px 0 0 13px; font-weight: 700; font-size: 13.6px; line-height: 16px; color: #12239e; white-space: nowrap; }

/* charts */
.charts { width: 873px; height: 599px; flex: none; font-family: "Liberation Sans", Arial, sans-serif; display: flex; flex-direction: column; }
.chart { display: grid; grid-template-columns: 664px 1fr; }
.c1 { height: 194px; }
.c2 { height: 193px; }
.c3 { height: 212px; }
.band { width: 199px; background: #3d3c3b; font-weight: 700; font-size: 13.8px; line-height: 16px; display: flex; align-items: center; justify-content: center; white-space: nowrap; padding-bottom: 2px; }
.band-1 { height: 29px; }
.band-2, .band-3 { height: 28px; }
.t-blue { color: #118dff; justify-content: flex-start; padding-left: 13px; }
.t-violet { color: #744ec2; }
.t-purple { color: #6b007b; }
.plot { display: block; }
.a-blue { fill: #566d80; }
.l-blue { fill: none; stroke: #65aede; stroke-width: 3; stroke-linejoin: miter; }
.a-gold { fill: #8c7c55; }
.l-gold { fill: none; stroke: #f5cb6c; stroke-width: 3; }
.a-taupe { fill: #7a7164; }
.l-taupe { fill: none; stroke: #c9b8a4; stroke-width: 3; }
.trend { stroke: #fff; stroke-width: 2; stroke-dasharray: 6 5; }
.dl, .ax { font-size: 12px; fill: #d0cecc; text-anchor: middle; }
.ax { fill: #c8c6c4; }

.daytbl { font-size: 13.6px; color: #e8e6e4; }
.dt-a { width: 177px; margin-top: 30px; --c: 82px; }
.dt-b { width: 163px; margin-top: 9px; --c: 107px; }
.dt-c { width: 157px; margin: 11px 0 0 8px; --c: 93px; }
.dhead, .drow, .dtotal { display: grid; grid-template-columns: var(--c) 1fr; padding-left: 5px; }
.dhead { height: 29px; line-height: 26px; color: #b3b0ad; border-bottom: 1px solid #666260; white-space: nowrap; }
.dhead > span:last-child { padding-left: 5px; position: relative; }
.sort-down::after { content: ""; position: absolute; left: 5px; top: 18px; border: 5px solid transparent; border-bottom: 0; border-top: 5px solid #c8c6c4; }
.drow { height: 16.5px; line-height: 15.5px; border-bottom: 1px solid #3f3b39; }
.drow > span:last-child, .dtotal > span:last-child { text-align: right; padding-right: 6px; }
.drow:nth-last-child(2) { border-bottom: 1px solid #666260; }
.dtotal { height: 18px; line-height: 16px; font-weight: 700; color: #fff; }

/* side panes */
.vpane { width: 33px; flex: none; display: flex; flex-direction: column; align-items: center; padding-top: 11px; }
.vp-filters { background: #3b3a39; border-left: 1px solid #8a8886; color: #fff; }
.vp-light { background: #f3f2f1; }
.vp-fields { border-left: 1px solid #e1dfdd; width: 32.5px; }
.vp-filters .vp-fi { margin-top: 16px; }
.vtext { writing-mode: vertical-rl; font-weight: 700; font-size: 14px; line-height: 16px; color: #fff; margin-top: 9px; }
.vtext-d { color: #323130; font-weight: 600; margin-top: 15px; font-size: 14.8px; }

/* page tabs */
.pagebar { height: 35px; flex: none; display: flex; }
.pg-nav { width: 39px; margin-left: 41px; border-left: 1px solid #d2d0ce; display: flex; align-items: center; gap: 17px; padding-left: 6px; flex: none; }
.pg-tab { width: 135px; flex: none; background: #fff; border-left: 1px solid #d2d0ce; border-bottom: 4px solid #f2c811; font-size: 11.5px; line-height: 34px; text-align: center; color: #252423; }
.pg-add { width: 39px; height: 32px; margin: 2px 0 0 1px; background: #f2c811; display: flex; align-items: center; justify-content: center; flex: none; }
.pg-right { margin-left: auto; width: 66px; border-left: 1px solid #d2d0ce; padding-left: 33px; }
.pg-right i { display: block; width: 1px; height: 100%; background: #d2d0ce; }

/* status bar */
.statusbar { height: 25px; flex: none; border-top: 1px solid #d9d7d5; display: flex; align-items: center; font-size: 11px; color: #484644; position: relative; }
.st-page { width: 1507px; padding-left: 5px; flex: none; margin-top: -2px; }
.st-minus { width: 9px; flex: none; font-weight: 700; }
.slider { position: relative; width: 100px; height: 1px; background: #605e5c; flex: none; }
.slider i { position: absolute; left: 49px; top: -5px; width: 4px; height: 11px; background: #605e5c; }
.st-plus { margin-left: 7px; width: 21px; flex: none; font-size: 14px; }
.st-zoom { width: 51px; flex: none; }
.st-fit { flex: none; width: 16px; }
.st-update { margin-left: 12px; white-space: nowrap; font-size: 11.6px; }

/* taskbar */
.taskbar { position: relative; height: 40px; flex: none; display: flex; align-items: stretch; background: linear-gradient(90deg, #1b1a1a 0, #1c1c1e 35%, #17253d 72%, #18253b 85%, #2b2024 95%, #201c20 100%); color: #fff; }
.tb { position: relative; width: 49px; flex: none; display: flex; align-items: center; justify-content: center; }
.tb-u::after { content: ""; position: absolute; left: 4px; right: 5px; bottom: 0; height: 2px; background: #76b9ed; }
.tb-on { background: #55534f; }
.tb-line { position: absolute; left: 1872px; top: -1px; width: 22px; height: 2px; background: #0a78d7; }
.tray { margin-left: auto; display: flex; align-items: stretch; flex: none; }
.tray-i { width: 24.5px; display: flex; align-items: center; justify-content: center; }
.clock { width: 66.5px; flex: none; display: flex; flex-direction: column; align-items: center; justify-content: center; font-size: 11.5px; line-height: 18px; white-space: nowrap; }
.notif { position: relative; width: 42px; flex: none; display: flex; align-items: center; justify-content: center; }
.notif-n { position: absolute; left: 21px; top: 19px; width: 17px; height: 17px; border-radius: 50%; border: 1px solid #a8a8a8; background: #222; font-size: 10px; line-height: 15px; text-align: center; }
.tb-end { width: 1px; flex: none; background: #666; margin-right: 11px; }
.ij { font: 700 9px "Liberation Sans", sans-serif; fill: #fff; }

/* watermark */
.activate { position: absolute; left: 1599px; top: 945px; pointer-events: none; white-space: nowrap; }
.act-1 { font-size: 19.1px; line-height: 26px; color: rgba(255,255,255,.3); }
.act-2 { font-size: 14.3px; line-height: 20px; color: rgba(150,150,150,.65); }
```
